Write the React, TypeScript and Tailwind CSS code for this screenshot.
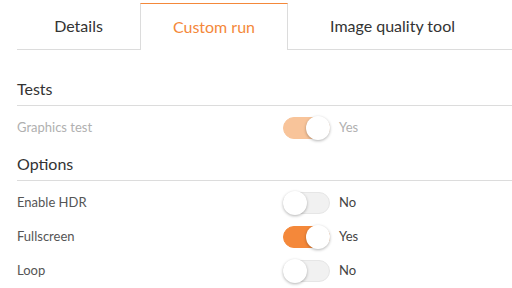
import React from 'react';

type Row = { label: string; on: boolean; disabled?: boolean };

function Toggle({ on, disabled }: { on: boolean; disabled?: boolean }) {
  const track = on ? (disabled ? 'bg-[#f8c49a] border-[#f8c49a]' : 'bg-[#f4883a] border-[#f4883a]') : 'bg-[#f1f1f1] border-[#e6e6e6]';
  return (
    <div className={`relative w-[47px] h-[22px] rounded-full border ${track}`}>
      <div
        className={`absolute top-[-2px] w-[24px] h-[24px] rounded-full bg-white shadow-[0_1px_3px_rgba(0,0,0,0.3)] ${on ? 'right-[-1px]' : 'left-[-1px]'}`}
      />
    </div>
  );
}

function SettingRow({ row }: { row: Row }) {
  return (
    <div className="flex items-center h-[34px]">
      <div className={`w-[266px] text-[13px] ${row.disabled ? 'text-[#b0b0b0]' : 'text-[#555]'}`}>{row.label}</div>
      <Toggle on={row.on} disabled={row.disabled} />
      <div className={`ml-[9px] text-[13px] ${row.disabled ? 'text-[#b0b0b0]' : 'text-[#444]'}`}>{row.on ? 'Yes' : 'No'}</div>
    </div>
  );
}

function Section({ title, rows }: { title: string; rows: Row[] }) {
  return (
    <div>
      <div className="h-[27px] flex items-end pb-[4px] border-b border-[#dcdcdc] text-[16px] text-[#333]">{title}</div>
      <div className="pt-[5px]">
        {rows.map(r => (
          <SettingRow key={r.label} row={r} />
        ))}
      </div>
    </div>
  );
}

export default function App() {
  return (
    <div className="w-[512px] h-[288px] bg-white overflow-hidden font-['Lato','Liberation_Sans',sans-serif]">
      <div className="pt-[3px] pl-[17px] flex">
        <div className="w-[123px] h-[47px] flex items-center justify-center border-b border-[#dcdcdc] text-[16px] text-[#333]">Details</div>
        <div className="w-[148px] h-[47px] flex items-center justify-center border-t border-t-[#f4883a] border-x border-x-[#dcdcdc] text-[16px] text-[#f4883a]">Custom run</div>
        <div className="flex-1 h-[47px] flex items-center justify-center pr-[15px] border-b border-[#dcdcdc] text-[16px] text-[#333]">Image quality tool</div>
      </div>
      <div className="pl-[17px] pt-[29px]">
        <Section title="Tests" rows={[{ label: 'Graphics test', on: true, disabled: true }]} />
        <div className="pt-[9px]">
          <Section
            title="Options"
            rows={[
              { label: 'Enable HDR', on: false },
              { label: 'Fullscreen', on: true },
              { label: 'Loop', on: false },
            ]}
          />
        </div>
      </div>
    </div>
  );
}
